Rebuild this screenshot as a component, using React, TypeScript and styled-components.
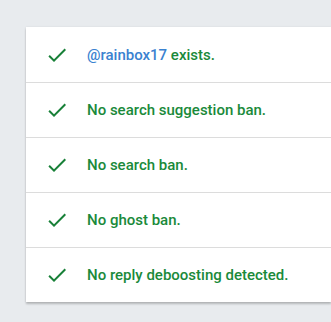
import styled, { createGlobalStyle } from 'styled-components';

const GlobalStyle = createGlobalStyle`
  html, body {
    margin: 0;
    padding: 0;
    background: #e8ebee;
    font-family: Roboto, "Noto Sans", sans-serif;
  }
`;

const Page = styled.div`
  padding: 27px 0 20px 26px;
`;

const Card = styled.ul`
  list-style: none;
  margin: 0;
  padding: 0;
  background: #fff;
  box-shadow: 0 2px 2px rgba(0, 0, 0, 0.22), 0 0 2px rgba(0, 0, 0, 0.08);
`;

const Row = styled.li`
  display: flex;
  align-items: center;
  gap: 18px;
  height: 54px;
  padding-left: 19px;
  border-top: 1px solid #dcdcdc;

  &:first-child {
    border-top: none;
    height: 55px;
  }
`;

const Text = styled.span`
  font-size: 15px;
  font-weight: 500;
  color: #1a8a3a;
`;

const Handle = styled.a`
  color: #3a82d0;
  text-decoration: none;
`;

const Check = () => (
  <svg width="24" height="24" viewBox="0 0 24 24" aria-hidden="true">
    <path fill="#188038" d="M9 16.17L4.83 12l-1.42 1.41L9 19 21 7l-1.41-1.41z" />
  </svg>
);

const results = [
  'No search suggestion ban.',
  'No search ban.',
  'No ghost ban.',
  'No reply deboosting detected.',
];

export default function App() {
  return (
    <>
      <GlobalStyle />
      <Page>
        <Card>
          <Row>
            <Check />
            <Text>
              <Handle href="#">@rainbox17</Handle> exists.
            </Text>
          </Row>
          {results.map((r) => (
            <Row key={r}>
              <Check />
              <Text>{r}</Text>
            </Row>
          ))}
        </Card>
      </Page>
    </>
  );
}
